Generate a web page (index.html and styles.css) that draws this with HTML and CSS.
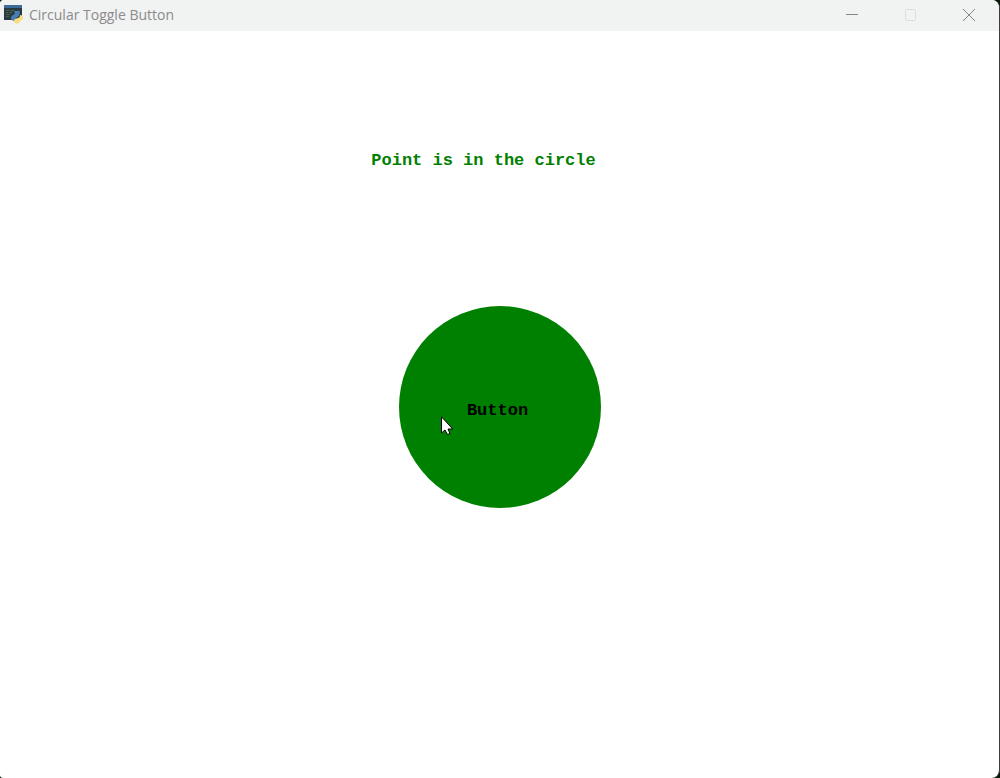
FILE: index.html
```html
<!DOCTYPE html>
<html lang="en">
<head>
<meta charset="utf-8">
<title>Circular Toggle Button</title>
<link rel="stylesheet" href="styles.css">
</head>
<body>
<div class="window">
  <header class="titlebar">
    <svg class="app-icon" width="20" height="20" viewBox="0 0 20 20" aria-hidden="true">
      <path fill="#2b3940" d="M0 1h18v14H0z"/>
      <path fill="#3c6c98" d="M0 0h18v3H0z"/>
      <path stroke="#3f6b48" d="M2 5.500h3M6 5.500h4M2 7.500h2M5 7.500h3M2 9.500h4M2 11.500h3"/>
      <path fill="#477fb3" d="M10 6h3q2-1 3 1l-1 4-3 2-1 3q-4 0-4-3 0-2 2-3l2-1z"/>
      <path fill="#f8dc80" d="M16 10q3 0 3 3 0 2-3 3l-1 2q-2 1-4 0-2-2 0-4l3-1q2 0 2-3z"/>
    </svg>
    <h1 class="title">Circular Toggle Button</h1>
    <div class="controls">
      <button class="control" type="button" aria-label="Minimize">
        <svg width="14" height="14" viewBox="0 0 14 14"><path d="M1 6.500h12"/></svg>
      </button>
      <button class="control" type="button" aria-label="Maximize" disabled>
        <svg width="14" height="14" viewBox="0 0 14 14"><rect x="1.500" y="1.500" width="10" height="11" rx="1"/></svg>
      </button>
      <button class="control" type="button" aria-label="Close">
        <svg width="14" height="14" viewBox="0 0 14 14"><path d="M0 1l12 12M12 1L0 13"/></svg>
      </button>
    </div>
  </header>
  <main class="canvas">
    <p class="message">Point is in the circle</p>
    <div class="toggle-area">
      <button class="toggle" type="button" aria-pressed="true">Button</button>
      <svg class="pointer" width="13" height="20" viewBox="0 0 13 20" aria-hidden="true">
        <path d="M.5 .8V17l3.500-3L6.500 18.500l2.500-1-2-4.500h4.700z" fill="#fff" stroke="#000"/>
      </svg>
    </div>
  </main>
</div>
</body>
</html>
```
FILE: styles.css
```css
* {
  box-sizing: border-box;
}

body {
  margin: 0;
  background: #061806;
}

.window {
  display: flex;
  flex-direction: column;
  min-height: 100vh;
  overflow: hidden;
  background: #fff;
  border-right: 1px solid #3c3c3c;
  border-radius: 4px 8px 8px 3px;
}

.titlebar {
  display: flex;
  align-items: center;
  height: 31px;
  padding: 0 0 2px 4px;
  background: #f1f2f2;
  color: #8b8b8b;
}

.app-icon {
  flex: none;
  margin-right: 5px;
}

.title {
  margin: 0;
  font: 400 14px/20px "Open Sans", "Noto Sans", sans-serif;
}

.controls {
  display: flex;
  align-self: stretch;
  margin-left: auto;
}

.control {
  display: flex;
  align-items: center;
  justify-content: center;
  width: 59px;
  padding: 0;
  border: 0;
  background: none;
  color: #858585;
}

.control:disabled {
  color: #dcdede;
}

.control svg {
  fill: none;
  stroke: currentColor;
}

.canvas {
  display: flex;
  flex: 1;
  flex-direction: column;
  align-items: center;
  padding-top: 120px;
  font: 700 17px/20px "Liberation Mono", monospace;
}

.message {
  margin: 0;
  padding-right: 32px;
  color: #008000;
}

.toggle-area {
  position: relative;
  margin-top: 135px;
}

.toggle {
  display: block;
  width: 202px;
  height: 202px;
  padding: 8px 4px 0 0;
  border: 0;
  border-radius: 50%;
  background: #008000;
  color: #000;
  font: inherit;
}

.pointer {
  position: absolute;
  top: 110px;
  left: 42px;
  pointer-events: none;
}
```
